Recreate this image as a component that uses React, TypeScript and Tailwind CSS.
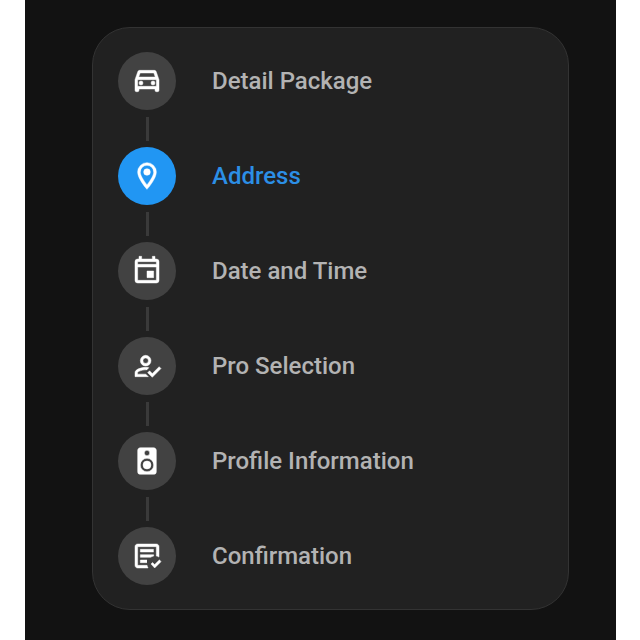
type Step = { label: string; icon: string };

const steps: Step[] = [
  {
    label: "Detail Package",
    icon: "M18.92 5C18.72 4.42 18.16 4 17.5 4h-11c-.66 0-1.22.42-1.42 1L3 11v8a1 1 0 0 0 1 1h1a1 1 0 0 0 1-1v-1h12v1a1 1 0 0 0 1 1h1a1 1 0 0 0 1-1v-8l-2.08-6zM6.85 6h10.29l1.04 3H5.81L6.85 6zM19 16H5v-5h14v5zM7.5 12A1.5 1.5 0 1 1 7.5 15A1.5 1.5 0 1 1 7.5 12zM16.5 12A1.5 1.5 0 1 1 16.5 15A1.5 1.5 0 1 1 16.5 12z",
  },
  {
    label: "Address",
    icon: "M12 6.5A2.5 2.5 0 0 1 14.5 9A2.5 2.5 0 0 1 12 11.5A2.5 2.5 0 0 1 9.5 9A2.5 2.5 0 0 1 12 6.5M12 2A7 7 0 0 1 19 9C19 14.25 12 22 12 22C12 22 5 14.25 5 9A7 7 0 0 1 12 2M12 4A5 5 0 0 0 7 9C7 10 7 12 12 18.71C17 12 17 10 17 9A5 5 0 0 0 12 4Z",
  },
  {
    label: "Date and Time",
    icon: "M19 3H18V1H16V3H8V1H6V3H5A2 2 0 0 0 3 5V19A2 2 0 0 0 5 21H19A2 2 0 0 0 21 19V5A2 2 0 0 0 19 3ZM19 19H5V9H19V19ZM19 7H5V5H19V7ZM12 12H17V17H12V12Z",
  },
  {
    label: "Pro Selection",
    icon: "M21.1 12.5L22.5 13.91L15.97 20.5L12.5 17L13.9 15.59L15.97 17.67L21.1 12.5M11 4A4 4 0 0 1 15 8A4 4 0 0 1 11 12A4 4 0 0 1 7 8A4 4 0 0 1 11 4M11 6A2 2 0 0 0 9 8A2 2 0 0 0 11 10A2 2 0 0 0 13 8A2 2 0 0 0 11 6M11 13C11.68 13 12.5 13.09 13.41 13.26L11.74 14.93L11 14.9C8.03 14.9 4.9 16.36 4.9 17V18.1H11.1L13 20H3V17C3 14.34 8.33 13 11 13Z",
  },
  {
    label: "Profile Information",
    icon: "M12 12A3 3 0 0 0 9 15A3 3 0 0 0 12 18A3 3 0 0 0 15 15A3 3 0 0 0 12 12M12 20A5 5 0 0 1 7 15A5 5 0 0 1 12 10A5 5 0 0 1 17 15A5 5 0 0 1 12 20M12 4A2 2 0 0 1 14 6A2 2 0 0 1 12 8C10.89 8 10 7.1 10 6C10 4.89 10.89 4 12 4M17 2H7C5.89 2 5 2.89 5 4V20A2 2 0 0 0 7 22H17A2 2 0 0 0 19 20V4C19 2.89 18.1 2 17 2Z",
  },
  {
    label: "Confirmation",
    icon: "M17.75 21L15 18L16.16 16.83L17.75 18.43L21.34 14.84L22.5 16.25L17.75 21M12.8 21H5C3.89 21 3 20.11 3 19V5C3 3.89 3.89 3 5 3H19C20.11 3 21 3.89 21 5V12.8C20.39 12.45 19.72 12.2 19 12.08V5H5V19H12.08C12.2 19.72 12.45 20.39 12.8 21M12 17H7V15H12M14.68 13H7V11H17V12.08C16.15 12.22 15.37 12.54 14.68 13M17 9H7V7H17",
  },
];

const current = 1;

export default function App() {
  return (
    <div className="min-h-screen bg-white pr-6 pl-[25px] font-['Roboto','Liberation_Sans',sans-serif]">
      <main className="min-h-screen bg-[#121212] pt-[27px] pr-[47px] pb-7 pl-[67px]">
        <ol className="rounded-[38px] border border-[#333333] bg-[#212121] py-6 pr-6 pl-[25px]">
          {steps.map((step, index) => {
            const active = index === current;
            return (
              <li key={step.label} aria-current={active ? "step" : undefined}>
                {index > 0 && (
                  <div className="flex h-[37px] w-[58px] items-center justify-center">
                    <span className="h-6 w-[3px] bg-[#3a3a3a]" />
                  </div>
                )}
                <div className="flex items-center gap-9">
                  <span
                    className={`flex size-[58px] shrink-0 items-center justify-center rounded-full text-white ${
                      active ? "bg-[#2196f3]" : "bg-[#424242]"
                    }`}
                  >
                    <svg
                      viewBox="0 0 24 24"
                      className="size-8"
                      fill="currentColor"
                      stroke="currentColor"
                      strokeWidth="0.35"
                      aria-hidden="true"
                    >
                      <path d={step.icon} />
                    </svg>
                  </span>
                  <span
                    className={`text-2xl font-medium ${active ? "text-[#2c8fe6]" : "text-[#b3b3b3]"}`}
                  >
                    {step.label}
                  </span>
                </div>
              </li>
            );
          })}
        </ol>
      </main>
    </div>
  );
}
